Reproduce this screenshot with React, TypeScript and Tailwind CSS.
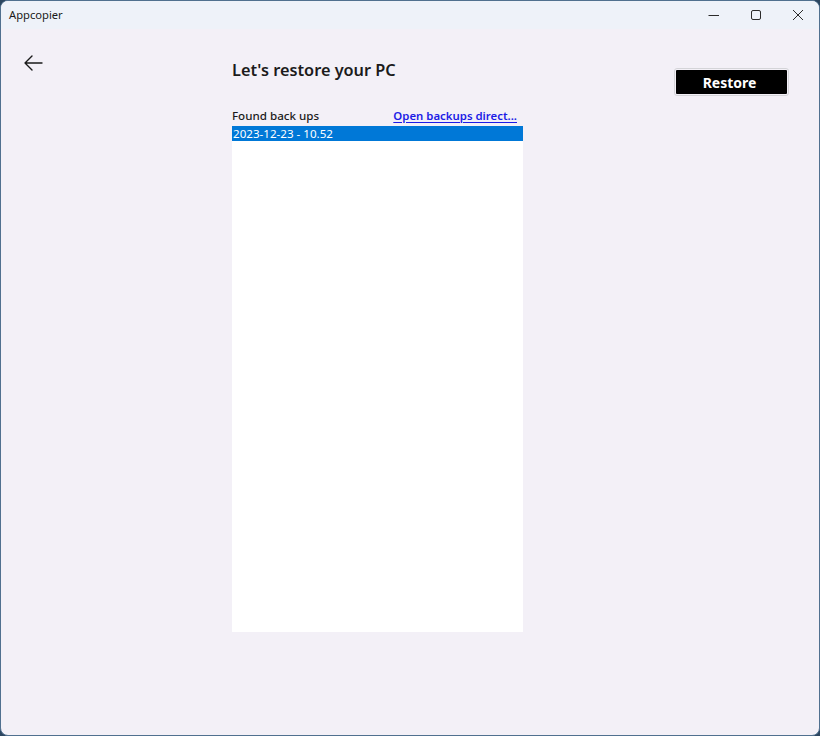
import React from "react";

export default function App() {
  return (
    <div className="w-[820px] h-[736px] bg-[#2c4660]">
      <div
        className="w-[820px] h-[736px] rounded-[8px] border border-[#50708f] bg-[#f3f0f7] overflow-hidden flex flex-col"
        style={{ fontFamily: '"Noto Sans", "Open Sans", sans-serif' }}
      >
        {/* Title bar */}
        <div className="h-[28px] bg-[#eef2f9] flex items-center shrink-0">
          <span className="ml-[8px] text-[11.2px] text-[#1a1a1a] leading-none">Appcopier</span>
          <div className="ml-auto flex items-center h-full">
            <div className="w-[42px] h-full flex items-center justify-center">
              <svg width="12" height="12" viewBox="0 0 12 12">
                <line x1="0.5" y1="6.5" x2="11" y2="6.5" stroke="#2b2b2b" strokeWidth="1" />
              </svg>
            </div>
            <div className="w-[42px] h-full flex items-center justify-center">
              <svg width="12" height="12" viewBox="0 0 12 12">
                <rect x="1.5" y="1.5" width="9" height="9" rx="1.5" fill="none" stroke="#2b2b2b" strokeWidth="1" />
              </svg>
            </div>
            <div className="w-[42px] h-full flex items-center justify-center">
              <svg width="12" height="12" viewBox="0 0 12 12">
                <path d="M1 1 L11 11 M11 1 L1 11" stroke="#2b2b2b" strokeWidth="1" fill="none" />
              </svg>
            </div>
          </div>
        </div>

        {/* Content */}
        <div className="flex flex-1">
          <div className="w-[231px] shrink-0">
            <div className="ml-[22px] mt-[24px] w-[20px] h-[20px]">
              <svg width="20" height="20" viewBox="0 0 20 20">
                <path d="M19 10 H2 M9 3 L2 10 L9 17" stroke="#1a1a1a" strokeWidth="1.4" fill="none" strokeLinecap="round" strokeLinejoin="round" />
              </svg>
            </div>
          </div>

          <div className="w-[291px] shrink-0 flex flex-col">
            <h1 className="mt-[29px] text-[16.3px] leading-[24px] font-semibold text-[#1b1b1b]">
              Let's restore your PC
            </h1>
            <div className="mt-[26px] flex items-center justify-between h-[16px]">
              <span className="text-[11.6px] leading-[16px] font-medium text-[#1b1b1b]">Found back ups</span>
              <a className="mr-[6px] text-[11.4px] leading-[16px] font-semibold text-[#1c1ce6] underline underline-offset-2">
                Open backups direct...
              </a>
            </div>
            <div className="mt-[2px] h-[506px] bg-white">
              <div className="h-[15px] bg-[#0078d7] text-white text-[11.6px] leading-[15px] pl-[1px]">
                2023-12-23 - 10.52
              </div>
            </div>
          </div>

          <div className="flex-1 flex justify-end">
            <button className="mt-[39px] mr-[30px] w-[115px] rounded-[3px] border border-[#d4d4d8] p-[1px] h-fit">
              <div className="h-[24px] bg-black rounded-[1px] flex items-center justify-center text-white text-[14px] font-bold pr-[4px]">
                Restore
              </div>
            </button>
          </div>
        </div>
      </div>
    </div>
  );
}
